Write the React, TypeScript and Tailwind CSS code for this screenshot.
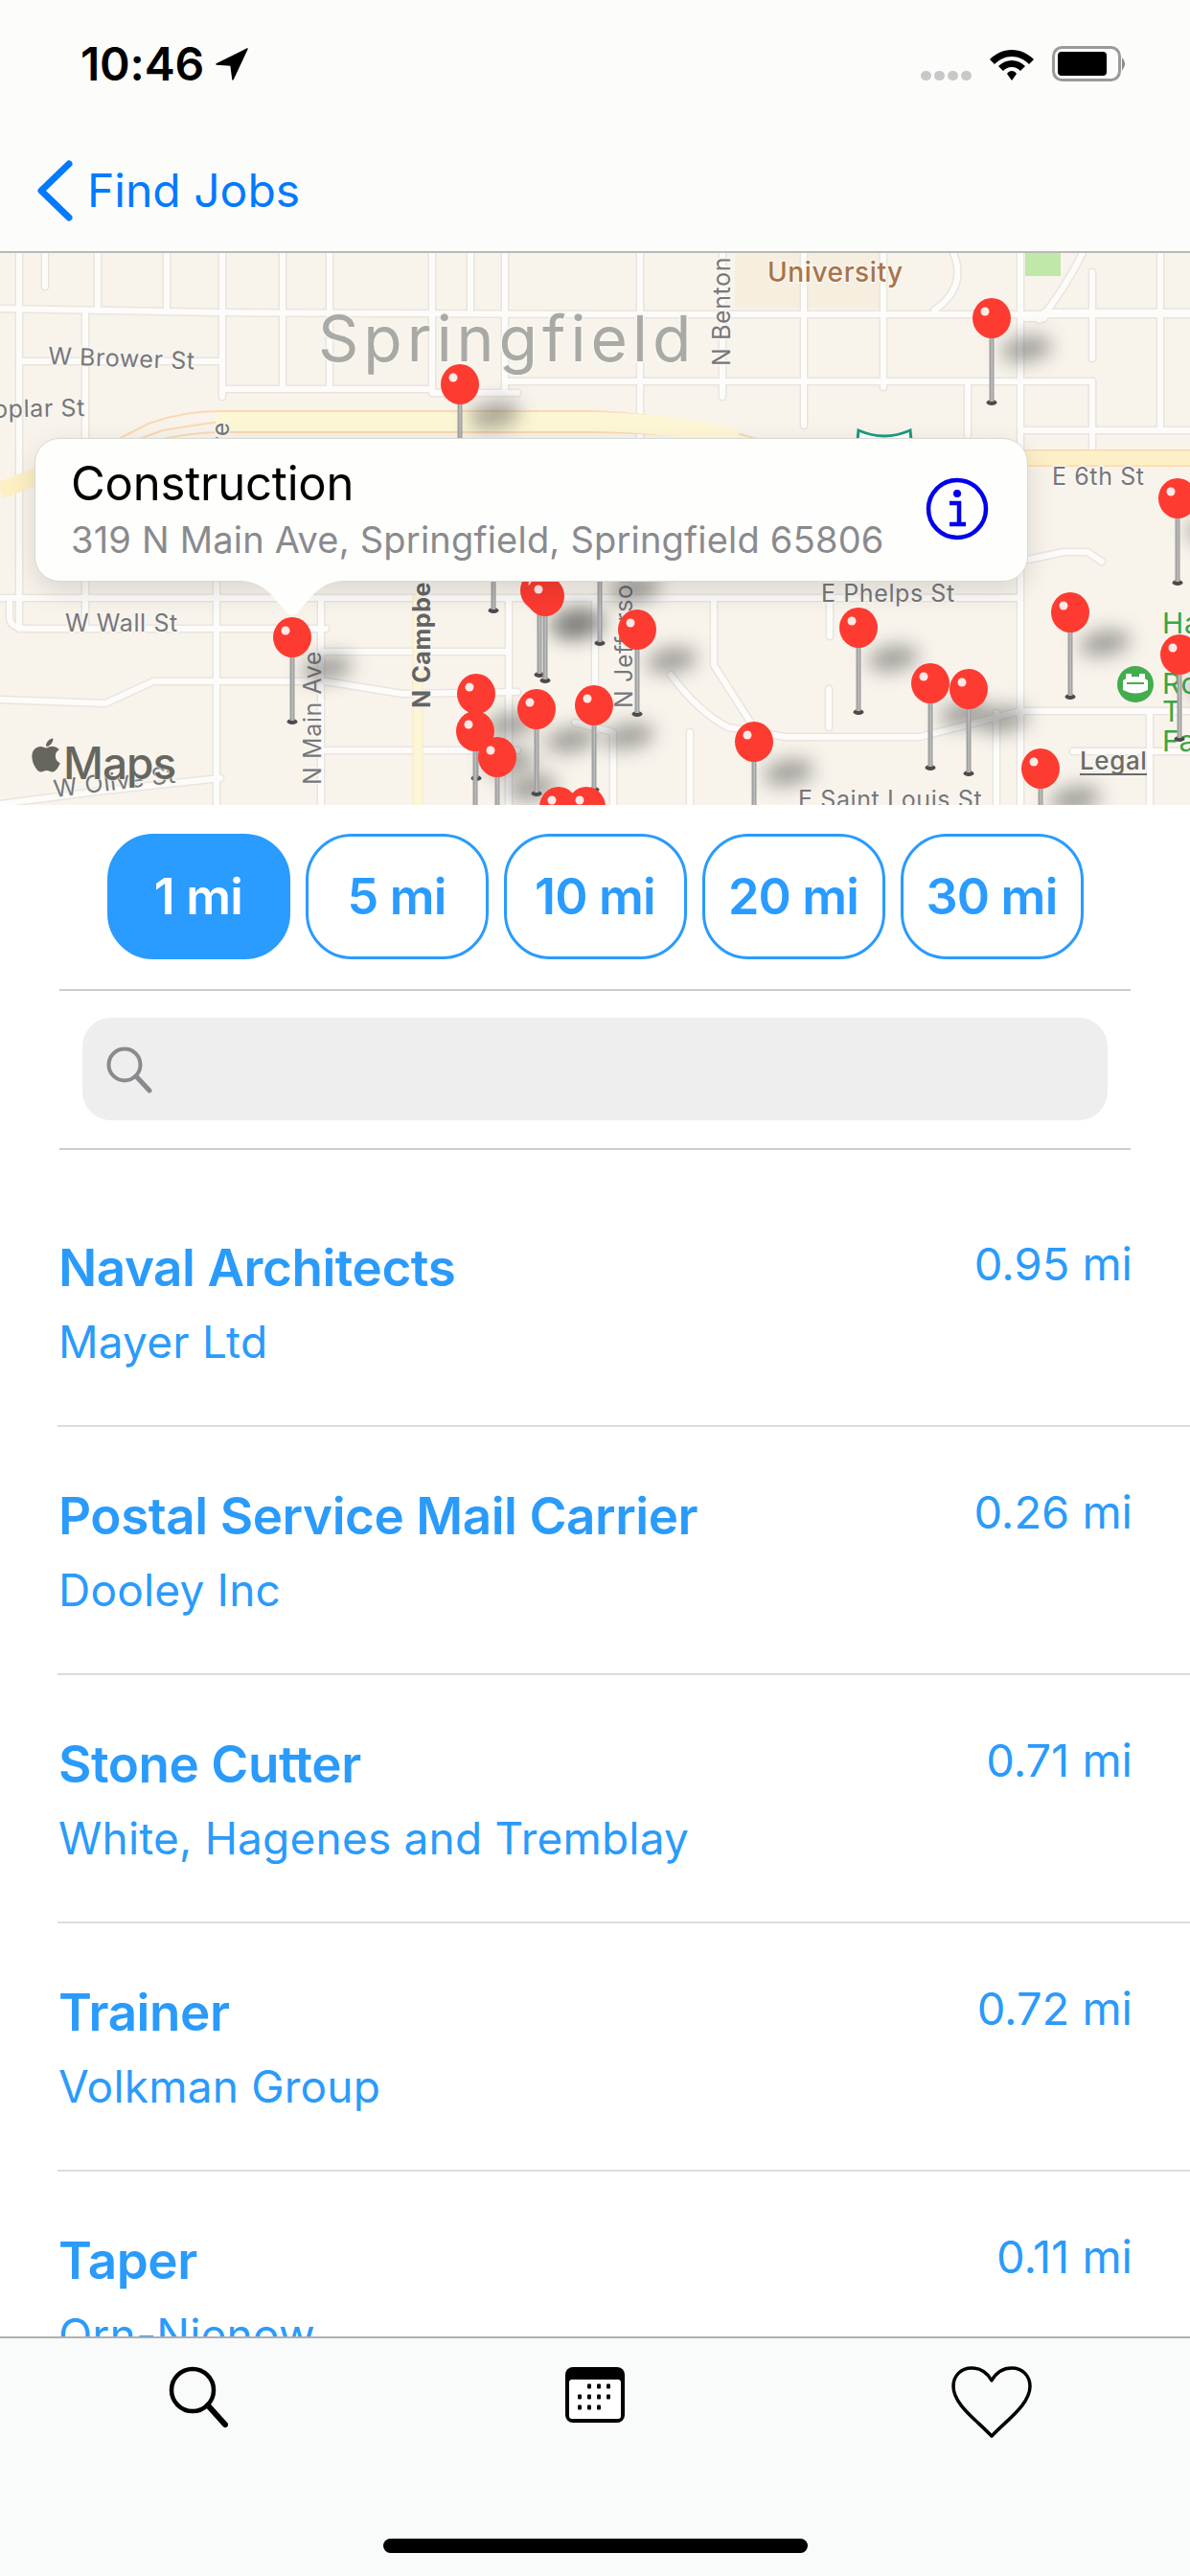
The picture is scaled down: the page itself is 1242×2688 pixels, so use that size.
import { FaApple } from "react-icons/fa";

const FONT = "font-['Inter','Liberation_Sans',sans-serif]";

const roads = [
  "M0 58 L226 62 L620 64 H1242", "M20 113 H232", "M232 142 H451", "M451 146 H540", "M530 134 H1140 V185",
  "M0 360 H1060", "M10 362 V382 Q12 392 30 392 H340", "M340 416 H530", "M0 466 L110 470 L160 447 H340 L420 460 L540 458",
  "M340 519 H540", "M0 575 L100 562 L230 548", "M1065 185 H1242", "M700 440 Q730 480 760 495 L820 505 H960 L1065 478 H1242",
  "M1065 0 V576", "M1085 70 Q1110 40 1130 0", "M975 60 Q1010 35 995 0", "M1090 68 H1070", "M1090 62 H1242",
  "M20 0 V392", "M47 0 V35", "M102 0 V60", "M89 60 V240", "M89 320 V392", "M174 0 V60", "M232 0 V150", "M226 340 V576",
  "M295 0 V142", "M344 0 V142", "M335 360 V576", "M451 0 V145", "M491 0 V60", "M527 0 V145", "M531 360 V576",
  "M668 0 V200", "M754 0 V150", "M839 0 V180", "M922 0 V140", "M1140 20 V110", "M1211 0 V185",
  "M1140 134 V205", "M1010 134 V190", "M621 360 V500", "M745 360 V430 L790 500", "M866 360 V400", "M865 455 V495", "M1000 360 Q1040 360 1065 360",
  "M1073 320 L1110 312 H1135 L1150 322", "M1120 520 H1242", "M1200 478 V576", "M1040 480 V576", "M720 500 V576", "M600 490 L640 500 V576",
];

const pins: [number, number][] = [
  [515, 285], [626, 319], [1035, 68], [480, 137], [1229, 256], [563, 352], [569, 358], [1117, 375], [896, 391], [665, 393], [305, 401],
  [1231, 419], [971, 449], [1011, 455], [497, 460], [620, 472], [560, 476], [496, 499], [787, 510], [519, 526], [1086, 538], [583, 578], [612, 578],
];

function Label(p: { x: number; y: number; t: string; s?: number; c?: string; r?: number; w?: number; a?: "start" | "end"; ls?: number }) {
  return (
    <text
      transform={`translate(${p.x} ${p.y}) rotate(${p.r ?? 0})`}
      fontFamily="Inter, sans-serif"
      fontSize={p.s ?? 25}
      fontWeight={p.w ?? 400}
      fill={p.c ?? "#77777a"}
      textAnchor={p.a ?? "start"}
      letterSpacing={p.ls ?? 0.6}
      stroke="#f9f6f0"
      strokeWidth={3}
      paintOrder="stroke"
    >
      {p.t}
    </text>
  );
}

function MapArt() {
  return (
    <svg viewBox="0 0 1242 576" className="block w-full h-full" xmlns="http://www.w3.org/2000/svg">
      <defs>
        <filter id="pinblur" x="-80%" y="-150%" width="260%" height="400%">
          <feGaussianBlur stdDeviation="10" />
        </filter>
      </defs>
      <rect width="1242" height="576" fill="#f8f4ec" />
      <rect x="767" y="0" width="153" height="58" fill="#f6efdf" />
      <rect x="1070" y="0" width="37" height="24" fill="#bfe8a9" />
      <g fill="none" strokeLinejoin="round" strokeLinecap="round">
        {roads.map((d, i) => <path key={i} d={d} stroke="#e9e5de" strokeWidth={9} />)}
        {roads.map((d, i) => <path key={i} d={d} stroke="#fdfcfa" strokeWidth={6} />)}
        <path d="M436 360 V576" stroke="#fbe6c4" strokeWidth={11} />
        <path d="M436 360 V576" stroke="#fdf6d4" strokeWidth={9} />
      </g>
      <g fill="none" strokeLinejoin="round">
        <path d="M120 196 L155 178 Q190 165 230 165 H620 Q700 168 790 194" stroke="#fad9b2" strokeWidth={2} />
        <path d="M140 196 L170 185 Q200 180 230 176" stroke="#fad9b2" strokeWidth={2} />
        <path d="M230 187 H620 Q690 187 780 198" stroke="#fad9b2" strokeWidth={2} />
        <path d="M160 196 Q200 187 232 187" stroke="#fad9b2" strokeWidth={2} />
        <path d="M225 176 H620 Q700 177 770 194" stroke="#fdf7d6" strokeWidth={20} />
        <path d="M0 248 L40 232" stroke="#fdf0c4" strokeWidth={18} />
        <path d="M1060 214 H1242" stroke="#fbd9ae" strokeWidth={18} />
        <path d="M1060 214 H1242" stroke="#fdf0c8" strokeWidth={15} />
      </g>
      <path d="M896 185 Q923 197 950 185 L952 205 H894 Z" fill="#fff" stroke="#1d9a7e" strokeWidth={3} />

      <Label x={332} y={113} t="Springfield" s={66} c="#a9a9a5" ls={5} />
      <Label x={50} y={116} t="W Brower St" r={2} />
      <Label x={89} y={170} t="Poplar St" a="end" r={-1} />
      <Label x={68} y={395} t="W Wall St" />
      <Label x={57} y={568} t="W Olive St" r={-7} />
      <Label x={335} y={555} t="N Main Ave" r={-90} />
      <Label x={449} y={475} t="N Campbell" r={-90} w={700} c="#646464" s={25} />
      <Label x={239} y={176} t="Ave" a="end" r={-90} />
      <Label x={762} y={118} t="N Benton" r={-90} />
      <Label x={660} y={475} t="N Jefferson" r={-90} />
      <Label x={801} y={30} t="University" s={28} w={500} c="#a8744a" />
      <Label x={1098} y={242} t="E 6th St" />
      <Label x={857} y={364} t="E Phelps St" />
      <Label x={833} y={579} t="E Saint Louis St" />
      <Label x={1127} y={539} t="Legal" s={26} w={500} c="#6b6b6b" />
      <path d="M1127 544 H1197" stroke="#6b6b6b" strokeWidth={2} />
      <Label x={1213} y={397} t="Ha" s={30} c="#3aa545" />
      <Label x={1213} y={460} t="Ro" s={30} c="#3aa545" />
      <Label x={1213} y={489} t="T" s={30} c="#3aa545" />
      <Label x={1213} y={520} t="Fa" s={30} c="#3aa545" />
      <circle cx={1185} cy={450} r={19} fill="#43ad4e" />
      <path d="M1172 446 Q1185 438 1198 446 V456 Q1185 463 1172 456 Z" fill="#fff" />
      <path d="M1175 439 h6 v5 h-6 z M1189 439 h6 v5 h-6 z" fill="#fff" />
      <path d="M1176 449 H1194" stroke="#43ad4e" strokeWidth={2} />

      {pins.map(([x, y], i) => (
        <ellipse key={"s" + i} cx={x + 36} cy={y + 32} rx={27} ry={13} fill="#4a4a48" opacity={0.5} filter="url(#pinblur)" transform={`rotate(-10 ${x + 36} ${y + 32})`} />
      ))}
      {pins.map(([x, y], i) => (
        <g key={i}>
          <ellipse cx={x} cy={y + 88} rx={5.5} ry={3} fill="#4b4b4b" />
          <rect x={x - 2.5} y={y + 18} width={5} height={69} fill="#a0a0a0" />
          <rect x={x - 0.5} y={y + 18} width={1.5} height={69} fill="#bdbdbd" />
          <ellipse cx={x} cy={y} rx={20} ry={21} fill="#fd3b31" />
          <circle cx={x - 7} cy={y - 7} r={4.5} fill="#ffe9e6" />
        </g>
      ))}
      <FaApple x={28} y={504} size={40} color="#66665f" />
      <text x={66} y={549} fontFamily="Inter, sans-serif" fontSize={46} fontWeight={500} fill="#66665f" letterSpacing={-1} stroke="#f9f6f0" strokeWidth={1} paintOrder="stroke">Maps</text>
    </svg>
  );
}

function Row({ title, sub, dist }: { title: string; sub: string; dist: string }) {
  return (
    <div className="h-[259px] shrink-0 ml-[60px] pl-[1px] pr-[60px] border-b-2 border-[#dcdcdc] flex justify-between text-[#2a9bfb]">
      <div className="pt-[60px]">
        <div className="text-[53px] leading-[66px] font-semibold tracking-[-0.45px] whitespace-nowrap">{title}</div>
        <div className="text-[46px] leading-[55px] mt-[17px] tracking-[0.2px] whitespace-nowrap">{sub}</div>
      </div>
      <div className="text-[47px] leading-[56px] pt-[61px] whitespace-nowrap">{dist}</div>
    </div>
  );
}

function Pill({ label, on }: { label: string; on?: boolean }) {
  return (
    <div className={`w-[191px] h-[131px] rounded-[48px] border-[3px] border-[#2a9bff] flex items-center justify-center text-[52px] font-semibold tracking-[-0.8px] ${on ? "bg-[#2a9bff] text-white" : "bg-white text-[#2a9bff]"}`}>
      {label}
    </div>
  );
}

export default function App() {
  return (
    <div className={`${FONT} w-[1242px] h-[2688px] bg-white flex flex-col overflow-hidden`}>
      {/* Header */}
      <div className="h-[264px] shrink-0 bg-[#fcfcfb] border-b-2 border-[#b9b9b5] flex flex-col">
        <div className="h-[130px] shrink-0 pt-[40px] pl-[84px] pr-[64px] flex items-start justify-between">
          <div className="flex items-center gap-[12px]">
            <span className="text-[48px] leading-[54px] font-semibold text-black tracking-[-0.2px]">10:46</span>
            <svg width="34" height="34" viewBox="0 0 34 34"><path d="M33 1 L1 17 L16 18 L18 33 Z" fill="#000" strokeLinejoin="round" stroke="#000" strokeWidth="1.5" /></svg>
          </div>
          <div className="flex items-center gap-[18px] pt-[8px]">
            <div className="flex gap-[3px] items-end h-[38px] pb-[2px]">
              {[0, 1, 2, 3].map((i) => <div key={i} className="w-[11px] h-[10px] rounded-full bg-[#c8c8c8]" />)}
            </div>
            <svg width="48" height="36" viewBox="0 0 48 36"><path d="M24 3 C15 3 7 7 1 13 L6 18 C11 13 17 10 24 10 C31 10 37 13 42 18 L47 13 C41 7 33 3 24 3 Z M24 14 C19 14 14 16 10 20 L15 25 C17 23 20 21 24 21 C28 21 31 23 33 25 L38 20 C34 16 29 14 24 14 Z M24 25 C22 25 20 26 19 28 L24 35 L29 28 C28 26 26 25 24 25 Z" fill="#000" /></svg>
            <svg width="80" height="38" viewBox="0 0 80 38"><rect x="1.5" y="1.5" width="69" height="34" rx="9" fill="none" stroke="#9a9a9a" strokeWidth="3" /><rect x="6" y="6" width="51" height="25" rx="4" fill="#000" /><path d="M73 12 Q79 18 73 26 Z" fill="#8a8a8a" /></svg>
          </div>
        </div>
        <div className="flex items-center pl-[38px] gap-[15px] mt-[37px]">
          <svg width="38" height="64" viewBox="0 0 38 64"><path d="M34 4 L5 32 L34 60" fill="none" stroke="#007aff" strokeWidth="7" strokeLinecap="round" strokeLinejoin="round" /></svg>
          <span className="text-[48px] leading-[60px] text-[#007aff]">Find Jobs</span>
        </div>
      </div>

      {/* Map */}
      <div className="relative h-[576px] shrink-0 overflow-hidden">
        <MapArt />
        <div className="absolute left-[36px] top-[193px] w-[1037px] h-[150px] rounded-[26px] bg-[#fefefc] border border-[#d8d8d4] shadow-[0_10px_30px_rgba(0,0,0,0.12)] pl-[37px] pr-[38px] flex items-center justify-between">
          <div className="mt-[-4px]">
            <div className="text-[49px] leading-[60px] text-black tracking-[-0.2px]">Construction</div>
            <div className="text-[38px] leading-[46px] text-[#8a8a8e] whitespace-nowrap mt-[5px] tracking-[0.2px]">319 N Main Ave, Springfield, Springfield 65806</div>
          </div>
          <svg width="66" height="66" viewBox="0 0 66 66" className="mt-[-2px] mr-[2px]"><circle cx="33" cy="33" r="30" fill="none" stroke="#0000ee" strokeWidth="4.5" /><circle cx="33" cy="17" r="4" fill="#0000ee" /><path d="M25 27 H35 V49 M25 49 H42" fill="none" stroke="#0000ee" strokeWidth="4.5" /></svg>
        </div>
        <svg width="110" height="40" viewBox="0 0 110 40" className="absolute left-[250px] top-[342px]"><path d="M0 0 C26 0 36 18 48 32 Q55 40 62 32 C74 18 84 0 110 0 Z" fill="#fefefc" /></svg>
      </div>

      {/* Pills */}
      <div className="shrink-0 h-[194px] mx-[62px] border-b-2 border-[#cccccc] flex items-start justify-center gap-[16px] pt-[30px]">
        <Pill label="1 mi" on />
        <Pill label="5 mi" />
        <Pill label="10 mi" />
        <Pill label="20 mi" />
        <Pill label="30 mi" />
      </div>

      {/* Search */}
      <div className="shrink-0 h-[166px] mx-[62px] border-b-2 border-[#cccccc] pl-[24px] pr-[24px] pt-[28px]">
        <div className="h-[107px] rounded-[30px] bg-[#eeeeee] flex items-center pl-[24px]">
          <svg width="50" height="50" viewBox="0 0 50 50"><circle cx="20" cy="20" r="16.5" fill="none" stroke="#8a8a8e" strokeWidth="4" /><path d="M32 32 L46 47" stroke="#8a8a8e" strokeWidth="5" strokeLinecap="round" /></svg>
        </div>
      </div>

      {/* List */}
      <div className="flex-1 min-h-0 overflow-hidden flex flex-col pt-[30px]">
        <Row title="Naval Architects" sub="Mayer Ltd" dist="0.95 mi" />
        <Row title="Postal Service Mail Carrier" sub="Dooley Inc" dist="0.26 mi" />
        <Row title="Stone Cutter" sub="White, Hagenes and Tremblay" dist="0.71 mi" />
        <Row title="Trainer" sub="Volkman Group" dist="0.72 mi" />
        <Row title="Taper" sub="Orn-Nienow" dist="0.11 mi" />
      </div>

      {/* Tab bar */}
      <div className="shrink-0 h-[250px] bg-[#f9fafa] border-t-2 border-[#b0b0b0] flex flex-col">
        <div className="grid grid-cols-3 justify-items-center pt-[29px]">
          <svg width="62" height="64" viewBox="0 0 62 64"><circle cx="25" cy="25" r="22" fill="none" stroke="#000" strokeWidth="4.5" /><path d="M41 41 L59 61" stroke="#000" strokeWidth="6" strokeLinecap="round" /></svg>
          <svg width="64" height="60" viewBox="0 0 64 60">
            <rect x="1" y="1" width="62" height="58" rx="8" fill="#000" />
            <rect x="5" y="14" width="54" height="41" rx="3" fill="#fff" />
            {[[26, 21], [36, 21], [46, 21], [16, 32], [26, 32], [36, 32], [46, 32], [16, 43], [26, 43], [36, 43]].map(([x, y], i) => (
              <rect key={i} x={x - 2} y={y - 2.5} width="4" height="5" rx="1" fill="#000" />
            ))}
          </svg>
          <svg width="84" height="76" viewBox="0 0 84 76"><path d="M42 73 C26 56 2 40 2 21 C2 10 10 2 21 2 C31 2 38 8 42 15 C46 8 53 2 63 2 C74 2 82 10 82 21 C82 40 58 56 42 73 Z" fill="none" stroke="#000" strokeWidth="3.5" strokeLinejoin="round" /></svg>
        </div>
        <div className="mt-auto mb-[24px] mx-auto w-[443px] h-[15px] rounded-full bg-black" />
      </div>
    </div>
  );
}
